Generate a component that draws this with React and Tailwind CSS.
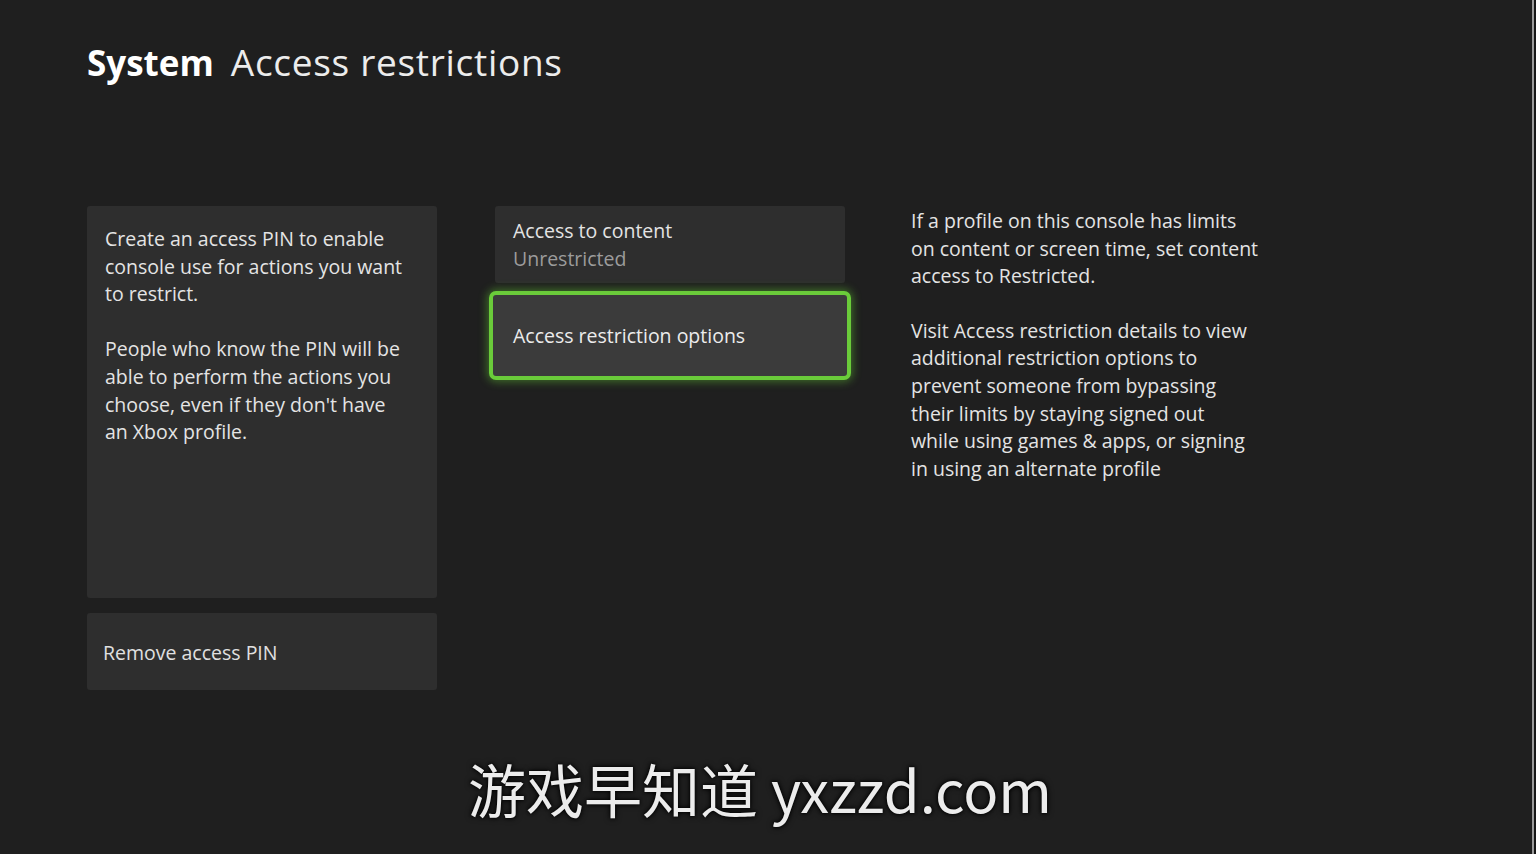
export default function App() {
  const font = { fontFamily: '"Open Sans", "Noto Sans", sans-serif' };
  return (
    <div className="relative w-[1536px] h-[854px] bg-[#1f1f1f] flex overflow-hidden" style={font}>
      <div className="flex-1 flex flex-col pl-[87px] text-[#e8e8e8]">
        <div className="h-[206px] pt-[38px]">
          <h1 className="leading-[48px] flex items-baseline gap-[17px]">
            <span className="text-[35px] font-bold text-white">System</span>
            <span className="text-[37px] tracking-[0.7px] font-normal text-[#ececec]">Access restrictions</span>
          </h1>
        </div>
        <div className="flex items-start">
          <div className="w-[350px] flex flex-col gap-[15px]">
            <div className="h-[392px] bg-[#2e2e2e] rounded-[3px] pl-[18px] pr-[10px] pt-[19px] text-[19.5px] leading-[27.7px] text-[#e4e4e4] whitespace-nowrap">
              <p>Create an access PIN to enable<br />console use for actions you want<br />to restrict.</p>
              <p className="mt-[27px]">People who know the PIN will be<br />able to perform the actions you<br />choose, even if they don't have<br />an Xbox profile.</p>
            </div>
            <div className="h-[77px] bg-[#2e2e2e] rounded-[3px] px-[16px] pt-[2px] flex items-center text-[19.5px] text-[#e0e0e0]">
              Remove access PIN
            </div>
          </div>
          <div className="w-[350px] ml-[58px] flex flex-col">
            <div className="h-[77px] bg-[#2e2e2e] rounded-[3px] px-[18px] pt-[11px] text-[19.5px] leading-[28px]">
              <div className="text-[#e4e4e4]">Access to content</div>
              <div className="text-[#9c9c9c]">Unrestricted</div>
            </div>
            <div className="-mx-[6px] mt-[8px] h-[89px] rounded-[7px] border-[4px] border-[#6acb3a] bg-[#3b3b3b] shadow-[0_0_8px_2px_rgba(100,200,50,0.45)] flex items-center px-[20px] text-[19.5px] text-[#ececec]">
              Access restriction options
            </div>
          </div>
          <div className="w-[370px] ml-[66px] pt-[1px] text-[19.5px] leading-[27.6px] text-[#e4e4e4] whitespace-nowrap">
            <p>If a profile on this console has limits<br />on content or screen time, set content<br />access to Restricted.</p>
            <p className="mt-[27px]">Visit Access restriction details to view<br />additional restriction options to<br />prevent someone from bypassing<br />their limits by staying signed out<br />while using games &amp; apps, or signing<br />in using an alternate profile</p>
          </div>
        </div>
      </div>
      <div className="w-[2px] bg-[#9a9a9a]" />
      <div className="w-[2px] bg-[#161616]" />
      <div
        className="absolute left-[468px] top-[748px] whitespace-nowrap text-[58px] leading-[80px] text-[#ececec] [text-shadow:0_0_3px_#000,0_0_6px_#000]"
        style={{ fontFamily: '"Noto Sans CJK SC", "Noto Sans", sans-serif' }}
      >
        游戏早知道 yxzzd.com
      </div>
    </div>
  );
}
